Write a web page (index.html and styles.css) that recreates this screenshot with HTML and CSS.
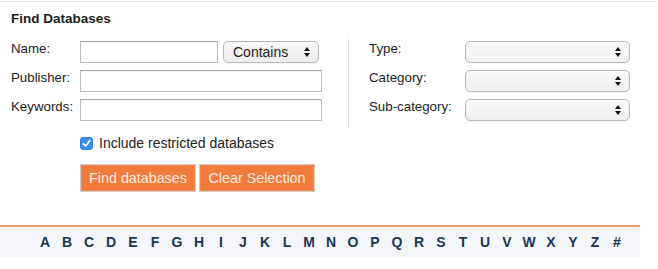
FILE: index.html
```html
<!DOCTYPE html>
<html>
<head>
<meta charset="utf-8">
<link rel="stylesheet" href="styles.css">
</head>
<body>
<div class="panel">
  <h2 class="title">Find Databases</h2>
  <div class="form">
    <div class="col left">
      <div class="row">
        <label class="lbl">Name:</label>
        <input class="txt name" type="text">
        <span class="sel contains">
          <span class="sel-text">Contains</span>
          <svg class="arrows" width="6" height="10" viewBox="0 0 6 10"><path d="M3 0 L6 4 L0 4 Z M0 6 L6 6 L3 10 Z" fill="#111"/></svg>
        </span>
      </div>
      <div class="row">
        <label class="lbl">Publisher:</label>
        <input class="txt wide" type="text">
      </div>
      <div class="row">
        <label class="lbl">Keywords:</label>
        <input class="txt wide" type="text">
      </div>
    </div>
    <div class="divider"></div>
    <div class="col right">
      <div class="row">
        <label class="lbl rlbl">Type:</label>
        <span class="sel rsel">
          <span class="sel-text"></span>
          <svg class="arrows" width="6" height="10" viewBox="0 0 6 10"><path d="M3 0 L6 4 L0 4 Z M0 6 L6 6 L3 10 Z" fill="#111"/></svg>
        </span>
      </div>
      <div class="row">
        <label class="lbl rlbl">Category:</label>
        <span class="sel rsel">
          <span class="sel-text"></span>
          <svg class="arrows" width="6" height="10" viewBox="0 0 6 10"><path d="M3 0 L6 4 L0 4 Z M0 6 L6 6 L3 10 Z" fill="#111"/></svg>
        </span>
      </div>
      <div class="row">
        <label class="lbl rlbl">Sub-category:</label>
        <span class="sel rsel">
          <span class="sel-text"></span>
          <svg class="arrows" width="6" height="10" viewBox="0 0 6 10"><path d="M3 0 L6 4 L0 4 Z M0 6 L6 6 L3 10 Z" fill="#111"/></svg>
        </span>
      </div>
    </div>
  </div>
  <label class="check">
    <span class="box"><svg width="9" height="9" viewBox="0 0 9 9"><path d="M1.5 4.8 L3.6 7 L7.6 1.8" fill="none" stroke="#fff" stroke-width="1.8" stroke-linecap="round" stroke-linejoin="round"/></svg></span>
    <span class="check-text">Include restricted databases</span>
  </label>
  <div class="buttons">
    <button class="btn find">Find databases</button>
    <button class="btn clear">Clear Selection</button>
  </div>
  <div class="alpha">
    <a class="letter">A</a><a class="letter">B</a><a class="letter">C</a><a class="letter">D</a><a class="letter">E</a><a class="letter">F</a><a class="letter">G</a><a class="letter">H</a><a class="letter">I</a><a class="letter">J</a><a class="letter">K</a><a class="letter">L</a><a class="letter">M</a><a class="letter">N</a><a class="letter">O</a><a class="letter">P</a><a class="letter">Q</a><a class="letter">R</a><a class="letter">S</a><a class="letter">T</a><a class="letter">U</a><a class="letter">V</a><a class="letter">W</a><a class="letter">X</a><a class="letter">Y</a><a class="letter">Z</a><a class="letter">#</a>
  </div>
</div>
</body>
</html>
```
FILE: styles.css
```css
html, body {
  margin: 0;
  padding: 0;
  background: #fff;
}
body {
  font-family: "Liberation Sans", Arial, sans-serif;
  color: #222;
}
.panel {
  width: 656px;
  margin-top: 1px;
  border-top: 1px solid #e4e4e4;
}
.title {
  margin: 0;
  padding: 9px 0 0 11px;
  font-size: 13.5px;
  line-height: 16px;
  font-weight: 700;
  color: #1e1e1e;
}
.form {
  display: flex;
  align-items: flex-start;
  margin-top: 14px;
}
.col {
  display: flex;
  flex-direction: column;
  gap: 7px;
}
.left {
  margin-left: 11px;
  width: 311px;
}
.right {
  margin-left: 20px;
}
.row {
  display: flex;
  align-items: flex-start;
  height: 22px;
}
.lbl {
  width: 69px;
  flex: none;
  font-size: 13.3px;
  line-height: 16px;
  color: #222;
}
.rlbl {
  width: 96px;
}
.txt {
  box-sizing: border-box;
  height: 22px;
  margin: 0;
  padding: 0 4px;
  border: 1px solid #bdbdbd;
  border-top-color: #a9a9a9;
  box-shadow: inset 0 1px 1px rgba(0,0,0,0.06);
  background: #fff;
  font: 13px "Liberation Sans", Arial, sans-serif;
}
.name {
  width: 138px;
}
.wide {
  width: 242px;
}
.sel {
  box-sizing: border-box;
  display: flex;
  align-items: center;
  justify-content: space-between;
  height: 22px;
  border: 1px solid #b9b9b9;
  border-radius: 5px;
  background: linear-gradient(#fafafa, #ececec);
  box-shadow: 0 1px 0 rgba(0,0,0,0.04);
}
.contains {
  width: 96px;
  margin-left: 5px;
  padding: 0 8px 0 9px;
}
.rsel {
  width: 165px;
  padding: 0 8px 0 9px;
  background: linear-gradient(#f8f9fa, #eef0f2);
}
.sel-text {
  font-size: 14px;
  line-height: 16px;
  color: #222;
}
.arrows {
  display: block;
  flex: none;
}
.divider {
  width: 0;
  height: 89px;
  margin: -2px 0 -7px 26px;
  border-left: 1px solid #dcdcdc;
}
.check {
  display: flex;
  align-items: center;
  gap: 6px;
  margin: 14px 0 0 80px;
  height: 17px;
}
.box {
  box-sizing: border-box;
  width: 13px;
  height: 13px;
  border-radius: 3px;
  background: #3a8ee6;
  border: 1px solid #2f7fd6;
  display: flex;
  align-items: center;
  justify-content: center;
}
.box svg {
  display: block;
}
.check-text {
  font-size: 14px;
  line-height: 17px;
  color: #222;
}
.buttons {
  display: flex;
  gap: 3px;
  margin: 12px 0 0 80px;
}
.btn {
  box-sizing: border-box;
  height: 28px;
  width: 116px;
  margin: 0;
  padding: 0;
  border: 1px solid #d3c9c2;
  background: #f27a3b;
  box-shadow: inset 0 0 0 1px #f48a52;
  color: #fdeee6;
  font: 14.3px "Liberation Sans", Arial, sans-serif;
  text-align: center;
}
.alpha {
  display: flex;
  width: 606px;
  margin-top: 33px;
  padding-left: 34px;
  border-top: 2px solid #ea9c6c;
  background: #f4f6f9;
  height: 30px;
}
.letter {
  width: 22px;
  text-align: center;
  font-size: 14px;
  line-height: 30px;
  font-weight: 700;
  color: #1c3554;
}
```
